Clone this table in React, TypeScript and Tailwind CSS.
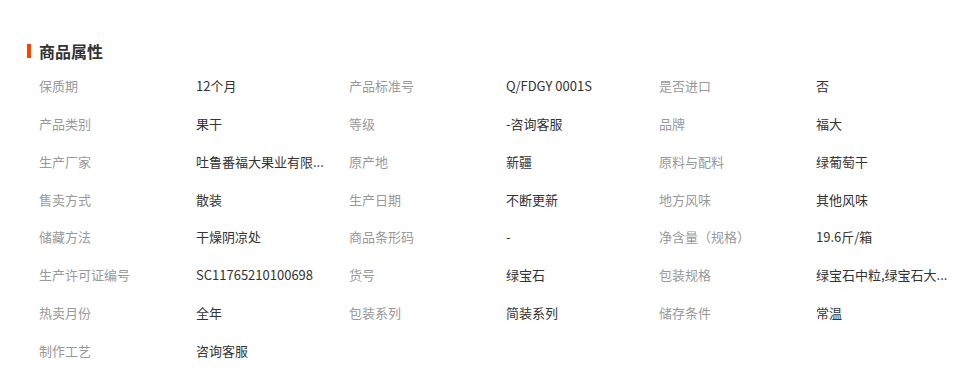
import React from "react";

const rows: [string, string][][] = [
  [["保质期", "12个月"], ["产品标准号", "Q/FDGY 0001S"], ["是否进口", "否"]],
  [["产品类别", "果干"], ["等级", "-咨询客服"], ["品牌", "福大"]],
  [["生产厂家", "吐鲁番福大果业有限..."], ["原产地", "新疆"], ["原料与配料", "绿葡萄干"]],
  [["售卖方式", "散装"], ["生产日期", "不断更新"], ["地方风味", "其他风味"]],
  [["储藏方法", "干燥阴凉处"], ["商品条形码", "-"], ["净含量（规格）", "19.6斤/箱"]],
  [["生产许可证编号", "SC11765210100698"], ["货号", "绿宝石"], ["包装规格", "绿宝石中粒,绿宝石大..."]],
  [["热卖月份", "全年"], ["包装系列", "简装系列"], ["储存条件", "常温"]],
  [["制作工艺", "咨询客服"]],
];

export default function App() {
  return (
    <div
      className="w-[963px] h-[374px] bg-white overflow-hidden"
      style={{ fontFamily: '"Noto Sans CJK SC", "Noto Sans", sans-serif' }}
    >
      <div className="pt-[42px] pl-[27px]">
        <div className="flex items-center h-[18px]">
          <div className="w-[4px] h-[14px] bg-[#ff4400]" />
          <div className="ml-[8px] text-[16px] font-bold text-[#333] leading-[18px]">商品属性</div>
        </div>
      </div>
      <div className="pl-[39px] pt-[7px]">
        {rows.map((row, i) => (
          <div key={i} className="flex h-[37.86px] items-center text-[13px] leading-[18px]">
            {row.map(([label, value], j) => (
              <div key={j} className="flex w-[310px]">
                <div className="w-[157px] text-[#999] whitespace-nowrap">{label}</div>
                <div className="w-[153px] text-[#333] whitespace-nowrap">{value}</div>
              </div>
            ))}
          </div>
        ))}
      </div>
    </div>
  );
}
